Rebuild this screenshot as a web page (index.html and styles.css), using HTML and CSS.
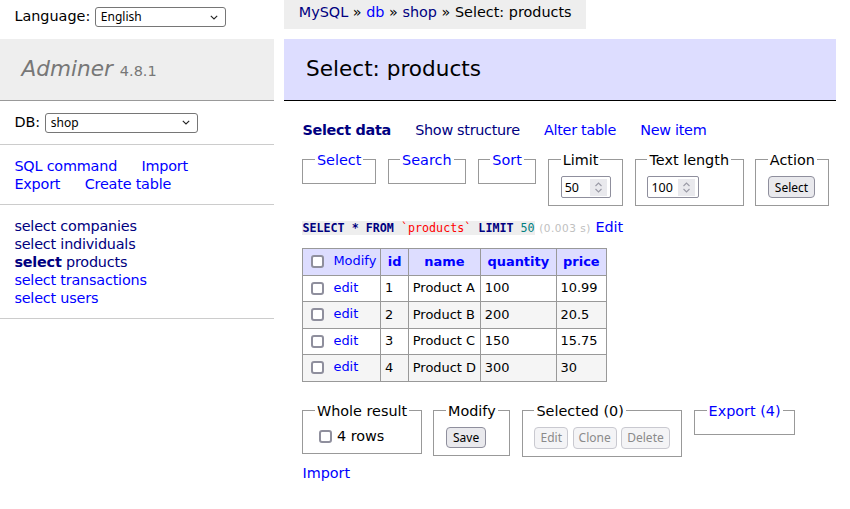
FILE: index.html
```html
<!DOCTYPE html>
<html lang="en">
<head>
<meta charset="utf-8">
<title>Select: products - Adminer</title>
<link rel="stylesheet" href="styles.css">
</head>
<body>
<div class="page">
  <div class="lang">Language: <span class="sel sel-lang"><select class="ctl sel-field"><option>English</option></select><svg class="chev" width="8" height="5" viewBox="0 0 8 5"><path d="M0.8 0.8 L4 4 L7.2 0.8" fill="none" stroke="#222" stroke-width="1.1"/></svg></span></div>
  <div class="breadcrumb"><a class="v" href="#">MySQL</a> » <a href="#">db</a> » <a class="v" href="#">shop</a> » Select: products</div>

  <aside class="menu">
    <h1 class="logo"><a class="logo-name" href="#">Adminer</a> <span class="version">4.8.1</span></h1>
    <p class="menu-block dbs">DB: <span class="sel sel-db"><select class="ctl sel-field"><option>shop</option></select><svg class="chev" width="8" height="5" viewBox="0 0 8 5"><path d="M0.8 0.8 L4 4 L7.2 0.8" fill="none" stroke="#222" stroke-width="1.1"/></svg></span></p>
    <p class="menu-block menu-links"><a href="#">SQL command</a> <a href="#">Import</a> <a href="#">Export</a> <a href="#">Create table</a></p>
    <ul class="menu-block tables">
      <li><a class="v" href="#">select</a> <a class="v" href="#">companies</a></li>
      <li><a class="v" href="#">select</a> <a class="v" href="#">individuals</a></li>
      <li><a class="v active" href="#">select</a> <a class="v" href="#">products</a></li>
      <li><a href="#">select</a> <a href="#">transactions</a></li>
      <li><a href="#">select</a> <a href="#">users</a></li>
    </ul>
  </aside>

  <main class="content">
    <h2 class="heading">Select: products</h2>
    <div class="inner">
      <p class="links"><a class="v active" href="#">Select data</a> <a class="v" href="#">Show structure</a> <a href="#">Alter table</a> <a href="#">New item</a></p>
      <form class="filters">
        <fieldset class="box"><legend><a href="#">Select</a></legend></fieldset>
        <fieldset class="box"><legend><a href="#">Search</a></legend></fieldset>
        <fieldset class="box"><legend><a href="#">Sort</a></legend></fieldset>
        <fieldset class="box"><legend>Limit</legend><div class="box-row"><span class="spin-input"><input class="ctl spin-field" type="text" value="50"><span class="spin"><svg width="17" height="17" viewBox="0 0 17 17"><path d="M5.5 7 L8.5 4 L11.5 7 M5.5 10 L8.5 13 L11.5 10" fill="none" stroke="#9a9aa6" stroke-width="1.1"/></svg></span></span></div></fieldset>
        <fieldset class="box"><legend>Text length</legend><div class="box-row"><span class="spin-input spin-wide"><input class="ctl spin-field" type="text" value="100"><span class="spin"><svg width="17" height="17" viewBox="0 0 17 17"><path d="M5.5 7 L8.5 4 L11.5 7 M5.5 10 L8.5 13 L11.5 10" fill="none" stroke="#9a9aa6" stroke-width="1.1"/></svg></span></span></div></fieldset>
        <fieldset class="box"><legend>Action</legend><div class="box-row"><button class="ctl btn" type="button">Select</button></div></fieldset>
      </form>
      <p class="query"><code class="sql"><b class="kw">SELECT * FROM</b> <span class="bac">`products`</span> <b class="kw">LIMIT</b> <span class="num-lit">50</span></code> <span class="time">(0.003 s)</span> <a href="#">Edit</a></p>

      <table class="data">
        <thead>
          <tr><td class="chk-cell"><input type="checkbox" class="chk"> <a href="#">Modify</a></td><th><a href="#">id</a></th><th><a href="#">name</a></th><th><a href="#">quantity</a></th><th><a href="#">price</a></th></tr>
        </thead>
        <tbody>
          <tr><td class="chk-cell"><input type="checkbox" class="chk"> <a class="edit" href="#">edit</a></td><td>1</td><td>Product A</td><td>100</td><td>10.99</td></tr>
          <tr class="odd"><td class="chk-cell"><input type="checkbox" class="chk"> <a class="edit" href="#">edit</a></td><td>2</td><td>Product B</td><td>200</td><td>20.5</td></tr>
          <tr><td class="chk-cell"><input type="checkbox" class="chk"> <a class="edit" href="#">edit</a></td><td>3</td><td>Product C</td><td>150</td><td>15.75</td></tr>
          <tr class="odd"><td class="chk-cell"><input type="checkbox" class="chk"> <a class="edit" href="#">edit</a></td><td>4</td><td>Product D</td><td>300</td><td>30</td></tr>
        </tbody>
      </table>

      <div class="footer">
        <fieldset class="box"><legend>Whole result</legend><div class="box-row"><label><input type="checkbox" class="chk">4 rows</label></div></fieldset>
        <fieldset class="box"><legend>Modify</legend><div class="box-row"><button class="ctl btn btn-save" type="button">Save</button></div></fieldset>
        <fieldset class="box"><legend>Selected (0)</legend><div class="box-row"><button class="ctl btn" type="button" disabled>Edit</button> <button class="ctl btn" type="button" disabled>Clone</button> <button class="ctl btn" type="button" disabled>Delete</button></div></fieldset>
        <fieldset class="box"><legend><a href="#">Export (4)</a></legend></fieldset>
      </div>
      <p class="import"><a href="#">Import</a></p>
    </div>
  </main>
</div>
</body>
</html>
```

FILE: styles.css
```css
body {
  margin: 0;
  color: #000;
  background: #fff;
  font: 14.4px/1.25 "DejaVu Sans", Verdana, sans-serif;
}

a {
  color: blue;
  text-decoration: none;
}

a.v {
  color: navy;
}

.active {
  font-weight: bold;
}

.page {
  display: grid;
  grid-template-columns: 284.4px 552px;
  grid-template-rows: 38.8px auto;
  align-items: start;
}

/* top row */
.lang {
  line-height: 25.92px;
  padding: 4.32px 14.4px;
  white-space: nowrap;
}

.breadcrumb {
  justify-self: start;
  white-space: nowrap;
  background: #eee;
  height: 28.8px;
  line-height: 25.92px;
  padding: 0 14.4px;
}

/* form controls */
.ctl {
  font: 12px "Noto Sans", "DejaVu Sans", sans-serif;
  color: #000;
  box-sizing: border-box;
}

.sel {
  display: inline-flex;
  align-items: center;
  vertical-align: middle;
  box-sizing: border-box;
  height: 20px;
  border: 1px solid #767676;
  border-radius: 3px;
  background: #fff;
  padding: 0 7px 0 0;
}

.sel-lang {
  width: 131px;
}

.sel-db {
  width: 153px;
}

.sel-field {
  appearance: none;
  -webkit-appearance: none;
  flex: 1;
  min-width: 0;
  height: 18px;
  border: 0;
  padding: 0 0 0 5px;
  background: transparent;
  outline: none;
  line-height: 18px;
}

.chev {
  flex: none;
}

.spin-input {
  display: inline-flex;
  align-items: center;
  vertical-align: middle;
  box-sizing: border-box;
  width: 50px;
  height: 22px;
  border: 1px solid #8f8f9d;
  border-radius: 2px;
  padding: 0 3px 0 3px;
  background: #fff;
}

.spin-wide {
  width: 52px;
}

.spin-field {
  flex: 1;
  min-width: 0;
  border: 0;
  padding: 0;
  outline: none;
  background: transparent;
  font-size: 12.5px;
}

.spin {
  flex: none;
  width: 17px;
  height: 17px;
  background: #e9e9ed;
  display: flex;
}

.btn {
  vertical-align: middle;
  background: #e9e9ed;
  border: 1px solid #8f8f9d;
  border-radius: 4px;
  padding: 0 6px;
  height: 22px;
}

.btn:disabled {
  background: #f4f4f6;
  border-color: #c9c9d0;
  color: #8a8a8a;
  padding: 0 5px;
}

.btn-save {
  height: 21px;
}

.chk {
  appearance: none;
  -webkit-appearance: none;
  box-sizing: border-box;
  width: 13px;
  height: 13px;
  margin: 3px 5px 3px 4px;
  border: 2px solid #8f8f9d;
  border-radius: 3px;
  background: #fff;
  vertical-align: middle;
}

/* sidebar */
.menu {
  width: 273.6px;
}

.logo {
  margin: 0;
  padding: 17.28px 21.6px;
  font-size: 21.6px;
  line-height: 1.25;
  font-weight: normal;
  color: #777;
  background: #eee;
  border-bottom: 1px solid #999;
}

.logo-name {
  color: #777;
  font-style: italic;
}

.version {
  font-size: 67%;
  color: #777;
}

.menu-block {
  margin: 0;
  padding: 11.52px 14.4px;
  border-bottom: 1px solid #ccc;
}

.menu-links,
.tables {
  letter-spacing: -0.2px;
}

.menu-links a {
  white-space: nowrap;
  margin-right: 20px;
}

.tables {
  list-style: none;
  white-space: nowrap;
}

/* content */
.heading {
  margin: 0 0 20px;
  padding: 17.28px 21.6px;
  font-size: 21.6px;
  line-height: 1.25;
  font-weight: normal;
  color: #000;
  background: #ddf;
  border-bottom: 1px solid #000;
}

.inner {
  padding-left: 18px;
}

.links {
  margin: 0;
  letter-spacing: -0.3px;
}

.links a {
  white-space: nowrap;
  margin-right: 20px;
}

.filters {
  margin: 0;
  white-space: nowrap;
}

.box {
  display: inline-block;
  vertical-align: top;
  margin: 11.52px 7.2px 0 0;
  padding: 7.2px 11.52px;
  border: 1px solid #999;
  min-width: 0;
  white-space: nowrap;
}

.box legend {
  padding: 0 2px;
}

.box-row {
  line-height: 18px;
}

.query {
  margin: 11.52px 0 0;
  line-height: 18px;
  height: 18px;
}

.sql {
  font-family: "DejaVu Sans Mono", monospace;
  font-size: 11.7px;
  background: #eee;
}

.kw {
  color: navy;
  font-weight: bold;
}

.bac {
  color: red;
}

.num-lit {
  color: #007f7f;
}

.time {
  color: silver;
  font-size: 10.5px;
  letter-spacing: 0.5px;
}

/* data table */
.data {
  margin: 12.4px 0 0;
  border-collapse: collapse;
  font-size: 12.96px;
}

.data tr {
  height: 26.5px;
}

.data td,
.data th {
  border: 1px solid #999;
  padding: 2.6px 3.9px;
  text-align: left;
}

.data thead th {
  text-align: center;
  padding: 2.6px 6.48px;
}

.data thead td,
.data thead th {
  background: #ddf;
}

.data .odd td {
  background: #f5f5f5;
}

.chk-cell {
  white-space: nowrap;
}

/* footer */
.footer {
  padding-top: 20px;
  padding-bottom: 5px;
  white-space: nowrap;
}

.footer .box {
  margin-top: 0;
}

.import {
  margin: 0;
  line-height: 22px;
}
```
